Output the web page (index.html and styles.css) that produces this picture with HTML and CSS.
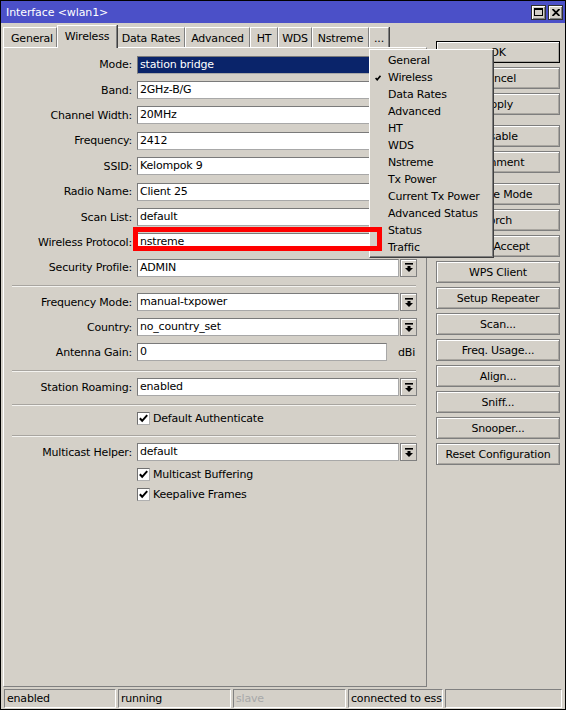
FILE: index.html
```html
<!DOCTYPE html>
<html>
<head>
<meta charset="utf-8">
<link rel="stylesheet" href="styles.css">
</head>
<body>
<div class="window">
  <div class="titlebar">
    <span class="title">Interface &lt;wlan1&gt;</span>
    <div class="tb-btns">
      <div class="tb-btn"><svg width="9" height="8" viewBox="0 0 9 8"><rect x="0.5" y="0.5" width="8" height="7" fill="none" stroke="#000"/><rect x="0" y="0" width="9" height="2" fill="#000"/></svg></div>
      <div class="tb-btn"><svg width="8" height="7" viewBox="0 0 8 7"><path d="M0.5,0 L7.5,7 M7.5,0 L0.5,7" stroke="#000" stroke-width="1.8"/></svg></div>
    </div>
  </div>
  <div class="main">
    <div class="leftcol">
      <div class="tabs">
        <div class="tab t-general">General</div>
        <div class="tab t-wireless active">Wireless</div>
        <div class="tab t-rates">Data Rates</div>
        <div class="tab t-adv">Advanced</div>
        <div class="tab t-ht">HT</div>
        <div class="tab t-wds">WDS</div>
        <div class="tab t-nstreme">Nstreme</div>
        <div class="tab t-more">...</div>
      </div>
      <div class="panel">
        <div class="group g1">
          <div class="row"><div class="label">Mode:</div><div class="field selected">station bridge</div><div class="dd"></div></div>
          <div class="row"><div class="label">Band:</div><div class="field">2GHz-B/G</div><div class="dd"></div></div>
          <div class="row"><div class="label">Channel Width:</div><div class="field">20MHz</div><div class="dd"></div></div>
          <div class="row"><div class="label">Frequency:</div><div class="field">2412</div><div class="dd"></div></div>
          <div class="row"><div class="label">SSID:</div><div class="field">Kelompok 9</div><div class="dd"></div></div>
          <div class="row"><div class="label">Radio Name:</div><div class="field">Client 25</div><div class="dd"></div></div>
          <div class="row"><div class="label">Scan List:</div><div class="field">default</div><div class="dd"></div></div>
          <div class="row"><div class="label">Wireless Protocol:</div><div class="field">nstreme</div><div class="dd"></div></div>
          <div class="row"><div class="label">Security Profile:</div><div class="field">ADMIN</div><div class="dd"><svg width="8" height="9" viewBox="0 0 8 9"><rect x="0" y="0" width="8" height="1.6" fill="#000"/><path d="M2.5,3 H5.5 V5 H8 L4,9 L0,5 H2.5 Z" fill="#000"/></svg></div></div>
        </div>
        <div class="sep s1"></div>
        <div class="group">
          <div class="row r25"><div class="label">Frequency Mode:</div><div class="field">manual-txpower</div><div class="dd"><svg width="8" height="9" viewBox="0 0 8 9"><rect x="0" y="0" width="8" height="1.6" fill="#000"/><path d="M2.5,3 H5.5 V5 H8 L4,9 L0,5 H2.5 Z" fill="#000"/></svg></div></div>
          <div class="row r25"><div class="label">Country:</div><div class="field">no_country_set</div><div class="dd"><svg width="8" height="9" viewBox="0 0 8 9"><rect x="0" y="0" width="8" height="1.6" fill="#000"/><path d="M2.5,3 H5.5 V5 H8 L4,9 L0,5 H2.5 Z" fill="#000"/></svg></div></div>
          <div class="row r25"><div class="label">Antenna Gain:</div><div class="field short">0</div><div class="unit">dBi</div></div>
        </div>
        <div class="sep s2"></div>
        <div class="row r25"><div class="label">Station Roaming:</div><div class="field">enabled</div><div class="dd"><svg width="8" height="9" viewBox="0 0 8 9"><rect x="0" y="0" width="8" height="1.6" fill="#000"/><path d="M2.5,3 H5.5 V5 H8 L4,9 L0,5 H2.5 Z" fill="#000"/></svg></div></div>
        <div class="sep s3"></div>
        <div class="crow"><div class="cb"><svg width="11" height="11" viewBox="0 0 11 11"><path d="M1.8,5.2 L4.2,7.8 L9.2,2.2" fill="none" stroke="#000" stroke-width="2"/></svg></div><span>Default Authenticate</span></div>
        <div class="sep s4"></div>
        <div class="row r25"><div class="label">Multicast Helper:</div><div class="field">default</div><div class="dd"><svg width="8" height="9" viewBox="0 0 8 9"><rect x="0" y="0" width="8" height="1.6" fill="#000"/><path d="M2.5,3 H5.5 V5 H8 L4,9 L0,5 H2.5 Z" fill="#000"/></svg></div></div>
        <div class="crow"><div class="cb"><svg width="11" height="11" viewBox="0 0 11 11"><path d="M1.8,5.2 L4.2,7.8 L9.2,2.2" fill="none" stroke="#000" stroke-width="2"/></svg></div><span>Multicast Buffering</span></div>
        <div class="crow"><div class="cb"><svg width="11" height="11" viewBox="0 0 11 11"><path d="M1.8,5.2 L4.2,7.8 L9.2,2.2" fill="none" stroke="#000" stroke-width="2"/></svg></div><span>Keepalive Frames</span></div>
      </div>
    </div>
    <div class="buttons">
      <div class="bgroup">
        <div class="btn default">OK</div>
        <div class="btn">Cancel</div>
        <div class="btn">Apply</div>
      </div>
      <div class="bgroup">
        <div class="btn">Disable</div>
        <div class="btn">Comment</div>
      </div>
      <div class="bgroup">
        <div class="btn">Simple Mode</div>
        <div class="btn">Torch</div>
        <div class="btn">WPS Accept</div>
        <div class="btn">WPS Client</div>
        <div class="btn">Setup Repeater</div>
        <div class="btn">Scan...</div>
        <div class="btn">Freq. Usage...</div>
        <div class="btn">Align...</div>
        <div class="btn">Sniff...</div>
        <div class="btn">Snooper...</div>
        <div class="btn">Reset Configuration</div>
      </div>
    </div>
  </div>
  <div class="statusbar">
    <div class="cell c1">enabled</div>
    <div class="cell c2">running</div>
    <div class="cell c3 dim">slave</div>
    <div class="cell c4">connected to ess</div>
    <div class="cell c5"></div>
  </div>

  <div class="menu">
    <div class="mi"><span class="mc"></span>General</div>
    <div class="mi"><span class="mc"><svg width="6" height="6" viewBox="0 0 6 6"><path d="M0.6,3 L2.2,4.8 L5.5,0.8" fill="none" stroke="#000" stroke-width="1.6"/></svg></span>Wireless</div>
    <div class="mi"><span class="mc"></span>Data Rates</div>
    <div class="mi"><span class="mc"></span>Advanced</div>
    <div class="mi"><span class="mc"></span>HT</div>
    <div class="mi"><span class="mc"></span>WDS</div>
    <div class="mi"><span class="mc"></span>Nstreme</div>
    <div class="mi"><span class="mc"></span>Tx Power</div>
    <div class="mi"><span class="mc"></span>Current Tx Power</div>
    <div class="mi"><span class="mc"></span>Advanced Status</div>
    <div class="mi"><span class="mc"></span>Status</div>
    <div class="mi"><span class="mc"></span>Traffic</div>
  </div>
  <div class="redbox"></div>
</div>
</body>
</html>
```

FILE: styles.css
```css
html, body {
  margin: 0;
  padding: 0;
  background: #d4d0c8;
}
body {
  font-family: "DejaVu Sans", "Noto Sans", sans-serif;
  font-size: 11px;
  letter-spacing: -0.2px;
  color: #000;
}
.window {
  position: relative;
  width: 566px;
  height: 710px;
  box-sizing: border-box;
  border: 1px solid #000;
  background: #d4d0c8;
  display: flex;
  flex-direction: column;
  overflow: hidden;
}
.titlebar {
  height: 22px;
  flex: none;
  background: #4b50c8;
  color: #fff;
  display: flex;
  align-items: center;
  justify-content: space-between;
  padding: 0 2px 0 5px;
}
.title {
  font-size: 11px;
  letter-spacing: -0.1px;
}
.tb-btns {
  display: flex;
  gap: 2px;
}
.tb-btn {
  width: 15px;
  height: 15px;
  box-sizing: border-box;
  background: #d4d0c8;
  border: 1px solid #303030;
  box-shadow: inset 1px 1px #fff, inset -1px -1px #808080;
  display: flex;
  align-items: center;
  justify-content: center;
}
.main {
  display: flex;
  height: 664px;
  flex: none;
  padding-left: 2px;
}
.leftcol {
  width: 424px;
  padding-top: 2px;
}
.tabs {
  display: flex;
  height: 22px;
  align-items: flex-end;
  position: relative;
  z-index: 2;
}
.tab {
  height: 20px;
  box-sizing: border-box;
  border-top: 1px solid #fff;
  border-left: 1px solid #fff;
  border-right: 1px solid #808080;
  box-shadow: 1px 0 #404040;
  display: flex;
  align-items: center;
  justify-content: center;
  white-space: nowrap;
  padding-top: 1px;
}
.tab.active {
  height: 23px;
  margin-bottom: -1px;
  background: #d4d0c8;
  position: relative;
  z-index: 3;
  padding-top: 0;
  padding-bottom: 2px;
}
.t-general { width: 54px; padding-left: 4px; }
.t-wireless { width: 60px; }
.t-rates { width: 68px; }
.t-adv { width: 65px; }
.t-ht { width: 28px; }
.t-wds { width: 34px; }
.t-nstreme { width: 57px; }
.t-more { width: 20px; }

.panel {
  height: 640px;
  box-sizing: border-box;
  border-top: 1px solid #fff;
  border-left: 1px solid #fff;
  border-right: 1px solid #808080;
  border-bottom: 1px solid #808080;
  padding-top: 4px;
}
.row {
  display: flex;
  align-items: center;
  height: 25.4px;
}
.row.r25 {
  height: 25px;
}
.label {
  width: 128px;
  margin-right: 5px;
  text-align: right;
  white-space: nowrap;
}
.field {
  width: 262px;
  height: 18px;
  box-sizing: border-box;
  border: 1px solid;
  border-color: #7a7a7a #a8a8a8 #a8a8a8 #7a7a7a;
  background: #fff;
  padding-left: 2px;
  line-height: 16px;
  white-space: nowrap;
  overflow: hidden;
}
.field.selected {
  background: #0a246a;
  color: #fff;
}
.field.short {
  width: 250px;
}
.unit {
  margin-left: 11px;
}
.dd {
  width: 17px;
  height: 18px;
  margin-left: 1px;
  box-sizing: border-box;
  border: 1px solid #808080;
  box-shadow: inset 1px 1px #fff;
  background: #d4d0c8;
  display: flex;
  align-items: center;
  justify-content: center;
}
.sep {
  margin-left: 8px;
  width: 404px;
  border-top: 1px solid #a8a5a0;
  border-bottom: 1px solid #f4f3f0;
  margin-bottom: 3px;
}
.s1 { margin-top: 4px; }
.s2 { margin-top: 5px; }
.s3 { margin-top: 4px; }
.s4 { margin-top: 6px; }
.crow {
  display: flex;
  align-items: center;
  height: 20px;
  padding-left: 133px;
}
.cb {
  width: 13px;
  height: 13px;
  box-sizing: border-box;
  border: 1px solid;
  border-color: #707070 #b0b0b0 #b0b0b0 #707070;
  background: #fff;
  margin-right: 3px;
  display: flex;
  align-items: center;
  justify-content: center;
}
.buttons {
  margin-left: 9px;
  width: 124px;
  padding-top: 18px;
  display: flex;
  flex-direction: column;
  gap: 10px;
}
.bgroup {
  display: flex;
  flex-direction: column;
  gap: 4px;
}
.btn {
  height: 22px;
  box-sizing: border-box;
  border: 1px solid #7e7e7e;
  box-shadow: inset 1px 1px #fff, inset -1px -1px #a9a6a0;
  display: flex;
  align-items: center;
  justify-content: center;
  white-space: nowrap;
}
.btn.default {
  border-color: #000;
}
.statusbar {
  display: flex;
  gap: 2px;
  padding-left: 3px;
  margin-top: 2px;
  height: 19px;
}
.cell {
  height: 19px;
  box-sizing: border-box;
  border: 1px solid;
  border-color: #808080 #fff #fff #808080;
  padding-left: 2px;
  line-height: 17px;
  white-space: nowrap;
  overflow: hidden;
}
.c1 { width: 112px; }
.c2 { width: 113px; }
.c3 { width: 113px; }
.c4 { width: 95px; }
.c5 { width: 117px; }
.dim { color: #a8a8a8; }

.menu {
  position: absolute;
  left: 368px;
  top: 48px;
  width: 125px;
  box-sizing: border-box;
  border: 1px solid;
  border-color: #fff #404040 #404040 #fff;
  box-shadow: inset -1px -1px #808080;
  background: #d4d0c8;
  padding: 2px 0 1px 0;
  z-index: 10;
}
.mi {
  display: flex;
  align-items: center;
  height: 17px;
  white-space: nowrap;
}
.mc {
  width: 18px;
  display: flex;
  align-items: center;
  padding-left: 5px;
  box-sizing: border-box;
}
.redbox {
  position: absolute;
  left: 132px;
  top: 226px;
  width: 249px;
  height: 24px;
  box-sizing: border-box;
  border: 5px solid #ff0000;
  z-index: 20;
}
```
